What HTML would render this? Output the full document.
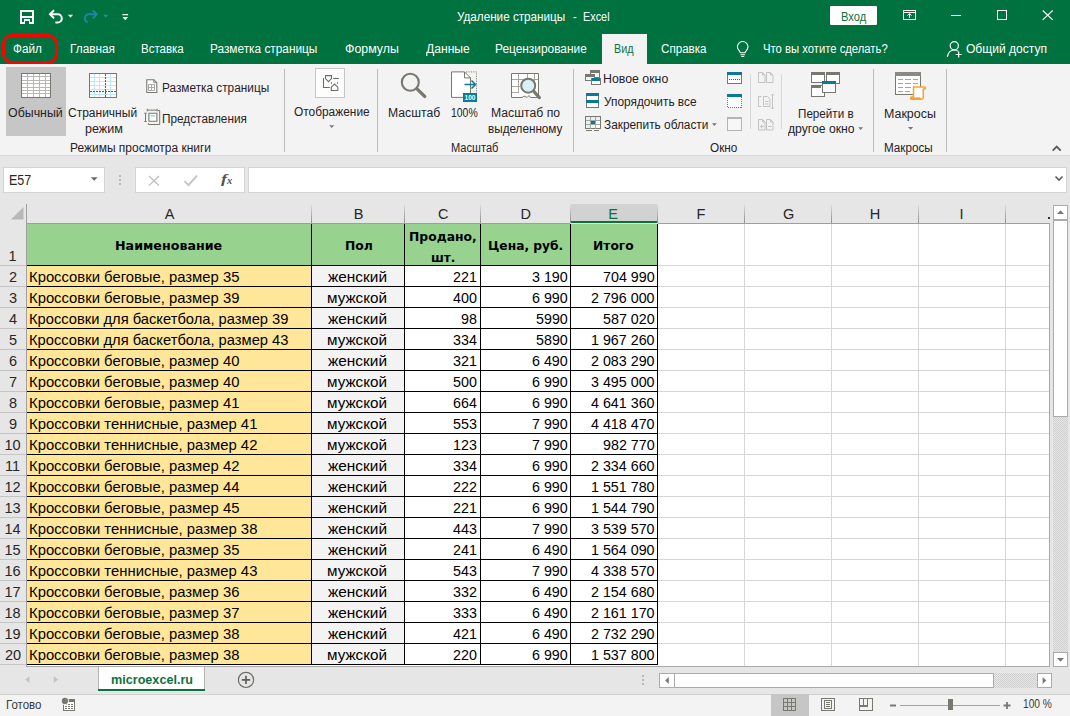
<!DOCTYPE html>
<html lang="ru">
<head>
<meta charset="utf-8">
<title>Удаление страницы - Excel</title>
<style>
*{box-sizing:border-box;margin:0;padding:0}
html,body{width:1070px;height:716px;overflow:hidden}
body{position:relative;background:#e6e6e6;font-family:"Liberation Sans",sans-serif;font-size:12px;color:#262626}
div,span,svg{position:absolute}
span{white-space:nowrap;line-height:20px;transform-origin:0 0;color:#262226}
.fr{font:12.5px/20px "Liberation Sans",sans-serif}
.fc{font:14.5px/20px "Liberation Sans",sans-serif}
.fh{font:bold 12.3px/20px "DejaVu Sans","Liberation Sans",sans-serif}
.ftab{font:bold 13.5px/20px "Liberation Sans",sans-serif}
.fs{font:12px/20px "Liberation Sans",sans-serif}
.ffx{font:italic bold 13.5px/20px "Liberation Serif",serif}
.ffx2{font:italic bold 10.5px/20px "Liberation Serif",serif}
span.fxc{color:#55544e}
span.w{color:#fff}
span.gr{color:#0f703f}
span.k{color:#000}
span.d{color:#262626}
span.st{color:#3a3a3a}
#top{left:0;top:0;width:1070px;height:64px;background:#00723f}
#vid{left:602px;top:34px;width:45px;height:30px;background:#f3f3f3}
#login{left:830px;top:6px;width:47px;height:19px;background:#fff;border-radius:1px}
#fileo{left:2px;top:34px;width:56px;height:30px;border:3px solid #ff0000;border-radius:10px}
#rib{left:0;top:64px;width:1070px;height:92px;background:#f3f3f3;border-bottom:1px solid #dadada}
.sep{width:1px;background:#bdbdbd;top:69px;height:83px}
.sep2{width:1px;background:#d8d8d8;top:74px;height:55px}
.box{background:#fff;border:1px solid #d4d4d4}
#sheet{left:27px;top:224px;width:1022px;height:442px;background:#fff}
.vl{top:224px;width:1px;height:442px;background:#d6d6d6}
.hl{left:658px;width:391px;height:1px;background:#d6d6d6}
.chs{top:204px;width:1px;height:19px;background:linear-gradient(#e0e0e0,#bdbdbd 40%,#8e8e8e)}
.rhs{left:0;width:26px;height:1px;background:#c4c4c4}
.th{top:224px;height:42px;background:#97d38e;border-right:1px solid #000;border-bottom:1px solid #000}
.c{height:22px;border:1px solid #000;border-left:0}
.a{left:27px;width:285px;background:#ffe699}
.b{left:312px;width:93px;background:#f3f3f3}
.cc{left:405px;width:76px;background:#fff}
.dd{left:481px;width:90px;background:#fff}
.e{left:571px;width:87px;background:#fff}
.dith{background-image:conic-gradient(#d0d0d0 25%,#e6e6e6 0 50%,#d0d0d0 0 75%,#e6e6e6 0);background-size:2px 2px}
</style>
</head>
<body>
<div id="top"><div id="vid"></div><div id="login"></div><div id="fileo"></div></div>
<div id="rib"></div>
<div style="left:6px;top:67px;width:60px;height:69px;background:#c6c6c6"></div>
<div class="box" style="left:315px;top:68px;width:30px;height:30px;background:#fdfdfd;border-color:#c6c6c6"></div>
<div class="sep" style="left:284px"></div>
<div class="sep" style="left:377px"></div>
<div class="sep" style="left:573px"></div>
<div class="sep" style="left:873px"></div>
<div class="sep" style="left:946px"></div>
<div class="sep2" style="left:750px"></div>
<div class="sep2" style="left:781px"></div>
<div class="box" style="left:3px;top:167px;width:102px;height:26px"></div>
<div class="box" style="left:135px;top:167px;width:110px;height:26px"></div>
<div class="box" style="left:248px;top:167px;width:819px;height:26px"></div>
<div style="left:571px;top:204px;width:87px;height:18px;background:#d2d2d2"></div>
<div style="left:570px;top:221px;width:88px;height:2px;background:#0f703f"></div>
<div style="left:26px;top:223px;width:544px;height:1px;background:#9f9f9f"></div>
<div style="left:658px;top:223px;width:392px;height:1px;background:#9f9f9f"></div>
<div style="left:26px;top:204px;width:1px;height:462px;background:#9f9f9f"></div>
<div class="chs" style="left:311px"></div>
<div class="chs" style="left:404px"></div>
<div class="chs" style="left:480px"></div>
<div class="chs" style="left:570px"></div>
<div class="chs" style="left:657px"></div>
<div class="chs" style="left:744px"></div>
<div class="chs" style="left:831px"></div>
<div class="chs" style="left:918px"></div>
<div class="chs" style="left:1005px"></div>
<div id="sheet"></div>
<div style="left:1049px;top:223px;width:1px;height:444px;background:#a8a8a8"></div>
<div style="left:26px;top:666px;width:1024px;height:1px;background:#a8a8a8"></div>
<div class="vl" style="left:744px"></div>
<div class="vl" style="left:831px"></div>
<div class="vl" style="left:918px"></div>
<div class="vl" style="left:1005px"></div>
<div class="rhs" style="top:265px"></div>
<div class="hl" style="top:265px"></div>
<div class="th" style="left:27px;width:285px"></div>
<div class="th" style="left:312px;width:93px"></div>
<div class="th" style="left:405px;width:76px"></div>
<div class="th" style="left:481px;width:90px"></div>
<div class="th" style="left:571px;width:87px"></div>
<div class="c a" style="top:265px"></div>
<div class="c b" style="top:265px"></div>
<div class="c cc" style="top:265px"></div>
<div class="c dd" style="top:265px"></div>
<div class="c e" style="top:265px"></div>
<div class="rhs" style="top:286px"></div>
<div class="hl" style="top:286px"></div>
<div class="c a" style="top:286px"></div>
<div class="c b" style="top:286px"></div>
<div class="c cc" style="top:286px"></div>
<div class="c dd" style="top:286px"></div>
<div class="c e" style="top:286px"></div>
<div class="rhs" style="top:307px"></div>
<div class="hl" style="top:307px"></div>
<div class="c a" style="top:307px"></div>
<div class="c b" style="top:307px"></div>
<div class="c cc" style="top:307px"></div>
<div class="c dd" style="top:307px"></div>
<div class="c e" style="top:307px"></div>
<div class="rhs" style="top:328px"></div>
<div class="hl" style="top:328px"></div>
<div class="c a" style="top:328px"></div>
<div class="c b" style="top:328px"></div>
<div class="c cc" style="top:328px"></div>
<div class="c dd" style="top:328px"></div>
<div class="c e" style="top:328px"></div>
<div class="rhs" style="top:349px"></div>
<div class="hl" style="top:349px"></div>
<div class="c a" style="top:349px"></div>
<div class="c b" style="top:349px"></div>
<div class="c cc" style="top:349px"></div>
<div class="c dd" style="top:349px"></div>
<div class="c e" style="top:349px"></div>
<div class="rhs" style="top:370px"></div>
<div class="hl" style="top:370px"></div>
<div class="c a" style="top:370px"></div>
<div class="c b" style="top:370px"></div>
<div class="c cc" style="top:370px"></div>
<div class="c dd" style="top:370px"></div>
<div class="c e" style="top:370px"></div>
<div class="rhs" style="top:391px"></div>
<div class="hl" style="top:391px"></div>
<div class="c a" style="top:391px"></div>
<div class="c b" style="top:391px"></div>
<div class="c cc" style="top:391px"></div>
<div class="c dd" style="top:391px"></div>
<div class="c e" style="top:391px"></div>
<div class="rhs" style="top:412px"></div>
<div class="hl" style="top:412px"></div>
<div class="c a" style="top:412px"></div>
<div class="c b" style="top:412px"></div>
<div class="c cc" style="top:412px"></div>
<div class="c dd" style="top:412px"></div>
<div class="c e" style="top:412px"></div>
<div class="rhs" style="top:433px"></div>
<div class="hl" style="top:433px"></div>
<div class="c a" style="top:433px"></div>
<div class="c b" style="top:433px"></div>
<div class="c cc" style="top:433px"></div>
<div class="c dd" style="top:433px"></div>
<div class="c e" style="top:433px"></div>
<div class="rhs" style="top:454px"></div>
<div class="hl" style="top:454px"></div>
<div class="c a" style="top:454px"></div>
<div class="c b" style="top:454px"></div>
<div class="c cc" style="top:454px"></div>
<div class="c dd" style="top:454px"></div>
<div class="c e" style="top:454px"></div>
<div class="rhs" style="top:475px"></div>
<div class="hl" style="top:475px"></div>
<div class="c a" style="top:475px"></div>
<div class="c b" style="top:475px"></div>
<div class="c cc" style="top:475px"></div>
<div class="c dd" style="top:475px"></div>
<div class="c e" style="top:475px"></div>
<div class="rhs" style="top:496px"></div>
<div class="hl" style="top:496px"></div>
<div class="c a" style="top:496px"></div>
<div class="c b" style="top:496px"></div>
<div class="c cc" style="top:496px"></div>
<div class="c dd" style="top:496px"></div>
<div class="c e" style="top:496px"></div>
<div class="rhs" style="top:517px"></div>
<div class="hl" style="top:517px"></div>
<div class="c a" style="top:517px"></div>
<div class="c b" style="top:517px"></div>
<div class="c cc" style="top:517px"></div>
<div class="c dd" style="top:517px"></div>
<div class="c e" style="top:517px"></div>
<div class="rhs" style="top:538px"></div>
<div class="hl" style="top:538px"></div>
<div class="c a" style="top:538px"></div>
<div class="c b" style="top:538px"></div>
<div class="c cc" style="top:538px"></div>
<div class="c dd" style="top:538px"></div>
<div class="c e" style="top:538px"></div>
<div class="rhs" style="top:559px"></div>
<div class="hl" style="top:559px"></div>
<div class="c a" style="top:559px"></div>
<div class="c b" style="top:559px"></div>
<div class="c cc" style="top:559px"></div>
<div class="c dd" style="top:559px"></div>
<div class="c e" style="top:559px"></div>
<div class="rhs" style="top:580px"></div>
<div class="hl" style="top:580px"></div>
<div class="c a" style="top:580px"></div>
<div class="c b" style="top:580px"></div>
<div class="c cc" style="top:580px"></div>
<div class="c dd" style="top:580px"></div>
<div class="c e" style="top:580px"></div>
<div class="rhs" style="top:601px"></div>
<div class="hl" style="top:601px"></div>
<div class="c a" style="top:601px"></div>
<div class="c b" style="top:601px"></div>
<div class="c cc" style="top:601px"></div>
<div class="c dd" style="top:601px"></div>
<div class="c e" style="top:601px"></div>
<div class="rhs" style="top:622px"></div>
<div class="hl" style="top:622px"></div>
<div class="c a" style="top:622px"></div>
<div class="c b" style="top:622px"></div>
<div class="c cc" style="top:622px"></div>
<div class="c dd" style="top:622px"></div>
<div class="c e" style="top:622px"></div>
<div class="rhs" style="top:643px"></div>
<div class="hl" style="top:643px"></div>
<div class="c a" style="top:643px"></div>
<div class="c b" style="top:643px"></div>
<div class="c cc" style="top:643px"></div>
<div class="c dd" style="top:643px"></div>
<div class="c e" style="top:643px"></div>
<div class="rhs" style="top:664px"></div>
<div style="left:1048px;top:217px;width:2px;height:2px;background:#333"></div>
<div class="dith" style="left:1053px;top:220px;width:15px;height:433px"></div>
<div class="box" style="left:1053px;top:205px;width:15px;height:15px;border-color:#ababab"></div>
<div class="box" style="left:1053px;top:220px;width:15px;height:197px;border-color:#ababab"></div>
<div class="box" style="left:1053px;top:652px;width:15px;height:15px;border-color:#ababab"></div>
<div class="dith" style="left:674px;top:673px;width:363px;height:15px"></div>
<div class="box" style="left:659px;top:673px;width:16px;height:15px;border-color:#ababab"></div>
<div class="box" style="left:674px;top:673px;width:320px;height:15px;border-color:#ababab"></div>
<div class="box" style="left:1037px;top:673px;width:15px;height:15px;border-color:#ababab"></div>
<div style="left:98px;top:667px;width:107px;height:24px;background:#fff;border-left:1px solid #b4b4b4;border-right:1px solid #b4b4b4"></div>
<div style="left:98px;top:689px;width:107px;height:2px;background:#0f703f"></div>
<div style="left:0;top:694px;width:1070px;height:22px;background:#f3f3f3"></div>
<div style="left:0;top:694px;width:1070px;height:1px;background:#d0d0d0"></div>
<div style="left:771px;top:694px;width:38px;height:22px;background:#c6c6c6"></div>
<svg width="1070" height="716" viewBox="0 0 1070 716" style="left:0;top:0" fill="none">
<!-- quick access toolbar -->
<g shape-rendering="crispEdges">
  <rect x="20" y="10" width="14" height="14" fill="#fff"/>
  <rect x="22" y="12" width="10" height="4" fill="#00723f"/>
  <rect x="22" y="18" width="10" height="4" fill="#00723f"/>
  <rect x="24" y="19" width="6" height="5" fill="#fff"/>
  <rect x="25" y="21" width="4" height="3" fill="#00723f"/>
</g>
<g stroke="#fff" stroke-width="2" fill="none">
  <path d="M54 10.300l-4 4 4 4"/>
  <path d="M50.300 14.300h7.400a4.100 4.100 0 0 1 0 8.200h-2.300"/>
</g>
<path d="M68 14.800h5l-2.500 2.900z" fill="#fff"/>
<g stroke="#1f86ab" stroke-width="1.900" fill="none">
  <path d="M92.800 10.300l4 4-4 4"/>
  <path d="M96.500 14.300h-7.400a4.100 4.100 0 0 0-1.300 8"/>
</g>
<path d="M103.300 14.800h4.800l-2.400 2.900z" fill="#2a8f9c"/>
<path d="M122.400 13.900h5.700v1.300h-5.700zM122.400 16.900h5.700l-2.850 3.300z" fill="#fff"/>
<!-- window controls -->
<g stroke="#fff" stroke-width="1" fill="none" shape-rendering="crispEdges">
  <path d="M903.5 10.5h12v9h-12zM903.5 12.5h12"/>
  <path d="M951 15.5h10"/>
  <path d="M997.5 10.5h9v9h-9z"/>
</g>
<path d="M909.5 18v-4M907.5 15.6l2-2 2 2" stroke="#fff" stroke-width="1"/>
<path d="M1042.7 10.5l10 9.4M1052.7 10.5l-10 9.4" stroke="#fff" stroke-width="1.1"/>
<!-- bulb -->
<g stroke="#fff" stroke-width="1.1" fill="none">
  <path d="M740.3 52.8c0-1.6-2.9-2.6-2.9-6a5.3 5.3 0 0 1 10.6 0c0 3.4-2.9 4.4-2.9 6z"/>
  <path d="M740.5 54.7h4.4M741.2 56.5h3"/>
</g>
<!-- share person -->
<g stroke="#fff" stroke-width="1.2" fill="none">
  <circle cx="954.3" cy="45.7" r="4.1"/>
  <path d="M947.4 57c.6-4.300 3.300-7 6.900-7 1.600 0 3 .5 4.100 1.400"/>
  <path d="M958.700 51.500v6M955.700 54.500h6"/>
</g>

<!-- ===== ribbon icons ===== -->
<!-- normal view grid -->
<g shape-rendering="crispEdges">
  <rect x="21" y="73" width="30" height="25" fill="#797870"/>
  <rect x="22" y="74" width="28" height="23" fill="#b9b9b3"/>
  <g fill="#fff">
    <rect x="22" y="74" width="5" height="2"/><rect x="28" y="74" width="5" height="2"/><rect x="34" y="74" width="5" height="2"/><rect x="40" y="74" width="5" height="2"/><rect x="46" y="74" width="4" height="2"/>
    <rect x="22" y="77" width="5" height="3"/><rect x="28" y="77" width="5" height="3"/><rect x="34" y="77" width="5" height="3"/><rect x="40" y="77" width="5" height="3"/><rect x="46" y="77" width="4" height="3"/>
    <rect x="22" y="81" width="5" height="2"/><rect x="28" y="81" width="5" height="2"/><rect x="34" y="81" width="5" height="2"/><rect x="40" y="81" width="5" height="2"/><rect x="46" y="81" width="4" height="2"/>
    <rect x="22" y="84" width="5" height="3"/><rect x="28" y="84" width="5" height="3"/><rect x="34" y="84" width="5" height="3"/><rect x="40" y="84" width="5" height="3"/><rect x="46" y="84" width="4" height="3"/>
    <rect x="22" y="88" width="5" height="2"/><rect x="28" y="88" width="5" height="2"/><rect x="34" y="88" width="5" height="2"/><rect x="40" y="88" width="5" height="2"/><rect x="46" y="88" width="4" height="2"/>
    <rect x="22" y="91" width="5" height="2"/><rect x="28" y="91" width="5" height="2"/><rect x="34" y="91" width="5" height="2"/><rect x="40" y="91" width="5" height="2"/><rect x="46" y="91" width="4" height="2"/>
    <rect x="22" y="94" width="5" height="3"/><rect x="28" y="94" width="5" height="3"/><rect x="34" y="94" width="5" height="3"/><rect x="40" y="94" width="5" height="3"/><rect x="46" y="94" width="4" height="3"/>
  </g>
</g>
<!-- page break preview -->
<g shape-rendering="crispEdges">
  <rect x="89.500" y="73.500" width="27" height="24" fill="#fff" stroke="#797870"/>
  <path d="M90 77.500h26M90 81.500h26M90 85.500h26M90 89.500h26M90 94.500h26M94.500 74v23M99.500 74v23M110.500 74v23" stroke="#bfe9f3"/>
  <path d="M105.500 74v23M90 91.500h26" stroke="#5a5a55" stroke-dasharray="2 1"/>
</g>
<!-- page layout small -->
<g stroke="#797870" fill="none">
  <path d="M146.800 79.700h7l3 3v9.800h-10z" fill="#fff" stroke-width="1.100"/>
  <path d="M153.800 79.700v3h3" stroke-width=".9"/>
  <path d="M148.500 84.500h6v6h-6zM151.500 84.500v6M148.500 87.500h6" stroke="#a9aba8"/>
</g>
<!-- custom views -->
<g stroke="#797870" fill="none">
  <path d="M148.900 113.200h8v8h-8z" fill="#fff" stroke-width="1.100"/>
  <rect x="150.500" y="115" width="4.800" height="1.800" fill="#a9dfee" stroke="none"/>
  <path d="M145.500 113.200v8.300M144.300 113.200h2.400M144.300 121.500h2.400" stroke-width="1"/>
  <path d="M147.300 110.100h9.800M147.300 108.800v2.600M157.100 108.800v2.600" stroke-width="1"/>
  <path d="M158 110.500h1.700v14h-11.300v-1.300" stroke-width="1"/>
</g>
<!-- display -->
<g stroke="#6f6e66" fill="none" stroke-width="1.100">
  <path d="M323.500 78v9.500h6.300"/>
  <path d="M325.500 75.600h6v3l-3 3.100-3-3.100z"/>
  <path d="M333.200 78.500h5.700"/>
  <path d="M331.500 82.200v1.600M337.500 82.200v1.600"/>
  <path d="M331.300 90.500h6.500v-3.300l-3.300-3.100-3.200 3.100z"/>
</g>
<path d="M329.200 125.200h5l-2.500 2.800z" fill="#797870"/>
<!-- zoom magnifier -->
<circle cx="410.300" cy="82.200" r="8.500" stroke="#797870" stroke-width="2.100"/>
<path d="M417 88.800l7.800 7.700" stroke="#797870" stroke-width="3.200" stroke-linecap="round"/>
<!-- 100% -->
<g>
  <path d="M451.500 71.900h13l6 6v19.500h-19z" fill="#fff" stroke="#797870"/>
  <path d="M464.500 71.900v6h6" stroke="#797870"/>
  <path d="M466 71.900h10.500v21" stroke="#797870" stroke-dasharray="1.200 1.200" stroke-width=".9"/>
  <path d="M464.500 84.500h10.500M471.500 80.500l4 4-4 4" stroke="#0b7a94" stroke-width="1.500"/>
  <rect x="463" y="93" width="14" height="9" fill="#0b7a94"/>
  <text x="470" y="100.300" text-anchor="middle" font-family="Liberation Sans, sans-serif" font-weight="bold" font-size="7.200" fill="#fff" textLength="11" lengthAdjust="spacingAndGlyphs">100</text>
</g>
<!-- zoom to selection -->
<g>
  <path d="M511.500 73.500h27v24h-8l-1.500-2-2 2-3-1.500-2 1.500h-10.500z" fill="#fff" stroke="#797870"/>
  <path d="M512 79.500h26M512 86.500h8M512 92.500h7M518.500 74v18M527.500 74v5M534.500 74v8" stroke="#a5a49e"/>
  <circle cx="528.200" cy="85.700" r="7" fill="#d9f0f6" stroke="#797870" stroke-width="2"/>
  <path d="M533.800 91.400l5.600 6.200" stroke="#797870" stroke-width="3.100" stroke-linecap="round"/>
</g>
<!-- new window -->
<g shape-rendering="crispEdges">
  <rect x="590.500" y="70.500" width="9" height="7" fill="#f3f3f3" stroke="#797870"/><rect x="590" y="70" width="10" height="3" fill="#797870"/>
  <rect x="585.500" y="74.500" width="9" height="6" fill="#f3f3f3" stroke="#797870"/><rect x="585" y="74" width="10" height="3" fill="#797870"/>
  <rect x="591.500" y="78.500" width="9" height="6" fill="#fff" stroke="#797870"/><rect x="592" y="78" width="8" height="3" fill="#0b7a94"/>
</g>
<!-- arrange all -->
<g shape-rendering="crispEdges">
  <rect x="586.500" y="93.500" width="12" height="14" fill="#fff" stroke="#797870"/>
  <rect x="586" y="93" width="13" height="3" fill="#0b7a94"/><rect x="586" y="100" width="13" height="3" fill="#0b7a94"/>
</g>
<!-- freeze panes -->
<g shape-rendering="crispEdges">
  <rect x="585.500" y="116.500" width="15" height="12" fill="#fff" stroke="#797870"/>
  <path d="M590.500 117v12M595.500 117v12M586 120.500h14M586 124.500h14" stroke="#a5a49e"/>
  <rect x="586" y="117" width="4" height="3" fill="#dff3f8"/><rect x="591" y="117" width="4" height="3" fill="#dff3f8"/><rect x="596" y="117" width="4" height="3" fill="#dff3f8"/>
  <rect x="586" y="121" width="4" height="3" fill="#dff3f8"/><rect x="586" y="125" width="4" height="3" fill="#dff3f8"/>
  <rect x="591" y="121" width="4" height="3" fill="#0b7a94"/>
  <path d="M586 130.500h6M594 130.500h5" stroke="#797870"/>
</g>
<path d="M712 123.200h4.800l-2.400 2.800z" fill="#797870"/>
<!-- split / hide / unhide -->
<g shape-rendering="crispEdges">
  <rect x="727.500" y="72.500" width="14" height="11" fill="#fff" stroke="#797870"/><rect x="727" y="72" width="15" height="3" fill="#0b7a94"/>
  <path d="M729 79.500h12" stroke="#0b7a94" stroke-dasharray="1 1"/>
  <rect x="727.500" y="94.500" width="14" height="13" fill="#fff" stroke="#797870" stroke-dasharray="1 1"/><rect x="727" y="94" width="15" height="3" fill="#0b7a94"/>
  <rect x="727.500" y="117.500" width="14" height="13" fill="#f7f7f7" stroke="#b4b4b0"/><rect x="727" y="117" width="15" height="2" fill="#b4b4b0"/>
</g>
<!-- disabled icons -->
<g stroke="#c3c3c3" fill="none">
  <path d="M758.500 72.500h4l2.500 2.500v7.500h-6.500zM766.500 72.500h4l2.500 2.500v7.500h-6.500zM762.500 72.500v2.500h2.500M770.500 72.500v2.500h2.500"/>
  <path d="M758.500 96.500h3M758.500 106.500h3M758.500 96.500v10M763.500 96.500h4l2.500 2.500v7.500h-6.500zM765 101.500h3.500M765 104h3.500M772.500 94v15M771 95.500l1.500-1.500 1.500 1.500M771 107.500l1.500 1.500 1.500-1.500"/>
  <path d="M758.500 119.500h4l2.500 2.500v8h-6.500zM766.500 119.500h4l2.500 2.500v8h-6.500zM762.500 119.500v2.500h2.500M770.500 119.500v2.500h2.500M760 126.500h3.500M761.700 124.700v3.600M768 126.500h3.500"/>
</g>
<!-- switch windows -->
<g shape-rendering="crispEdges">
  <rect x="811.500" y="72.500" width="13" height="10" fill="#fff" stroke="#797870"/><rect x="811" y="72" width="14" height="3" fill="#797870"/>
  <rect x="826.500" y="72.500" width="13" height="11" fill="#fff" stroke="#797870"/><rect x="826" y="72" width="14" height="3" fill="#797870"/>
  <rect x="811.500" y="85.500" width="13" height="11" fill="#fff" stroke="#797870"/><rect x="811" y="85" width="10" height="3" fill="#797870"/>
  <rect x="822.500" y="81.500" width="13" height="11" fill="#fff" stroke="#797870"/><rect x="822" y="81" width="14" height="3" fill="#0b7a94"/>
</g>
<path d="M858.200 127.300h4.800l-2.400 2.800z" fill="#797870"/>
<!-- macros -->
<g shape-rendering="crispEdges">
  <rect x="895.500" y="72.500" width="25" height="22" fill="#fff" stroke="#797870"/><rect x="895" y="72" width="26" height="4" fill="#8a8983"/>
  <path d="M898 79.500h5M905 79.500h6M913 79.500h5M898 83.500h5M905 83.500h6M913 83.500h5M898 87.500h5M905 87.500h6M898 91.500h5M905 91.500h5" stroke="#a5a49e"/>
</g>
<path d="M913.500 87h10.800c1.200 0 1.400 2 0 2h-1v8.300c0 1.600-1.200 2-2.300 2h-9.300c-1.500 0-1.500-2.300 0-2.300h1.800z" fill="#fff" stroke="#f7a233" stroke-width="1.500"/>
<path d="M910.500 98.300h10" stroke="#f7a233" stroke-width="2"/>
<path d="M908 126.900h5.200l-2.600 2.900z" fill="#797870"/>
<path d="M1052.700 150.600l4-4 4 4" stroke="#5c5c58" stroke-width="1.900"/>

<!-- ===== formula bar ===== -->
<path d="M90.700 177.200h7l-3.500 3.600z" fill="#6a6a66"/>
<g fill="#b9b9b9"><rect x="119" y="175" width="2" height="2"/><rect x="119" y="179" width="2" height="2"/><rect x="119" y="183" width="2" height="2"/></g>
<path d="M149 176l10 9.500M159 176l-10 9.500" stroke="#c2c2c2" stroke-width="1.400"/>
<path d="M184.500 181l4 4.200 8.500-9.500" stroke="#c2c2c2" stroke-width="1.800"/>
<path d="M1055.500 176.500l3.500 3.500 3.500-3.500" stroke="#5c5c58" stroke-width="1.600"/>
<!-- corner triangle -->
<path d="M11 219.500h12.500v-12.500z" fill="#b8b8b8"/>
<!-- scroll arrows -->
<path d="M1057 214h7l-3.500-3.700z" fill="#797870"/>
<path d="M1057 658h7l-3.500 3.700z" fill="#797870"/>
<path d="M668.800 677v7l-3.700-3.500z" fill="#797870"/>
<path d="M1042.600 677v7l3.700-3.500z" fill="#797870"/>
<g fill="#b9b9b9"><rect x="642" y="675" width="2" height="2"/><rect x="642" y="679" width="2" height="2"/><rect x="642" y="683" width="2" height="2"/></g>
<!-- sheet nav -->
<path d="M29.500 676.300v6.600l-4.300-3.300zM53.800 676.300v6.600l4.300-3.300z" fill="#c3c3c3"/>
<circle cx="246" cy="679.900" r="7.600" stroke="#6e6e6a" stroke-width="1.200"/>
<path d="M241.800 679.900h8.400M246 675.700v8.400" stroke="#5e5e5a" stroke-width="1.700"/>
<!-- status bar icons -->
<g shape-rendering="crispEdges">
  <rect x="63.500" y="699.500" width="11" height="11" fill="#fff" stroke="#797870"/>
  <rect x="63" y="699" width="12" height="3" fill="#797870"/>
  <rect x="63" y="710" width="12" height="1" fill="#797870"/>
  <path d="M65 704.500h2M68 704.500h2M71 704.500h2M65 706.500h2M68 706.500h2M71 706.500h2M65 708.500h2M68 708.500h2M71 708.500h2" stroke="#797870"/>
</g>
<circle cx="64.900" cy="700.900" r="4" fill="#f3f3f3"/>
<circle cx="64.900" cy="700.900" r="3.100" fill="#797870"/>
<g shape-rendering="crispEdges" fill="#797870">
  <rect x="783" y="698" width="13" height="13"/>
  <g fill="#c6c6c6"><rect x="784" y="699" width="3" height="3"/><rect x="788" y="699" width="3" height="3"/><rect x="792" y="699" width="3" height="3"/><rect x="784" y="703" width="3" height="3"/><rect x="788" y="703" width="3" height="3"/><rect x="792" y="703" width="3" height="3"/><rect x="784" y="707" width="3" height="3"/><rect x="788" y="707" width="3" height="3"/><rect x="792" y="707" width="3" height="3"/></g>
</g>
<g shape-rendering="crispEdges" stroke="#797870" fill="none">
  <rect x="821.500" y="698.500" width="13" height="12"/>
  <rect x="824.500" y="700.500" width="7" height="8"/>
  <path d="M826 702.500h4M826 704.500h4M826 706.500h4"/>
  <path d="M859.500 698.500h13v12h-13zM863.500 699v7M867.500 699v7"/>
  <path d="M860 706h8" stroke-width="2"/>
</g>
<path d="M890 705.500h6" stroke="#797870" stroke-width="2"/>
<path d="M900 705.500h100" stroke="#a3a3a0" stroke-width="1" shape-rendering="crispEdges"/>
<rect x="948" y="699" width="5" height="11" fill="#797870"/>
<path d="M1003.500 705.500h7M1007 702v7" stroke="#797870" stroke-width="1.800"/>
</svg>
<span class="fr w" style="left:457.10px;top:7.30px;transform:scaleX(0.9353)">Удаление страницы</span>
<span class="fr w" style="left:573.00px;top:7.30px;transform:scaleX(0.9000)">-</span>
<span class="fr w" style="left:582.73px;top:7.30px;transform:scaleX(0.8684)">Excel</span>
<span class="fr gr" style="left:840.71px;top:7.30px;transform:scaleX(0.8934)">Вход</span>
<span class="fr w" style="left:13.20px;top:39.00px;transform:scaleX(0.9396)">Файл</span>
<span class="fr w" style="left:70.35px;top:39.00px;transform:scaleX(0.9452)">Главная</span>
<span class="fr w" style="left:141.28px;top:39.00px;transform:scaleX(0.9185)">Вставка</span>
<span class="fr w" style="left:210.35px;top:39.00px;transform:scaleX(0.9465)">Разметка страницы</span>
<span class="fr w" style="left:345.30px;top:39.00px;transform:scaleX(0.9888)">Формулы</span>
<span class="fr w" style="left:425.50px;top:39.00px;transform:scaleX(0.9689)">Данные</span>
<span class="fr w" style="left:495.45px;top:39.00px;transform:scaleX(0.9511)">Рецензирование</span>
<span class="fr w" style="left:661.30px;top:39.00px;transform:scaleX(0.9290)">Справка</span>
<span class="fr w" style="left:762.70px;top:39.00px;transform:scaleX(0.9021)">Что вы хотите сделать?</span>
<span class="fr w" style="left:966.00px;top:39.00px;transform:scaleX(0.9638)">Общий доступ</span>
<span class="fr gr" style="left:613.94px;top:39.00px;transform:scaleX(0.8647)">Вид</span>
<span class="fr " style="left:8.10px;top:103.00px;transform:scaleX(0.9916)">Обычный</span>
<span class="fr " style="left:68.30px;top:103.00px;transform:scaleX(0.9605)">Страничный</span>
<span class="fr " style="left:84.80px;top:119.00px;transform:scaleX(1.0025)">режим</span>
<span class="fr " style="left:162.46px;top:77.70px;transform:scaleX(0.9447)">Разметка страницы</span>
<span class="fr " style="left:162.46px;top:108.70px;transform:scaleX(0.9435)">Представления</span>
<span class="fr " style="left:69.54px;top:138.00px;transform:scaleX(0.9583)">Режимы просмотра книги</span>
<span class="fr " style="left:293.50px;top:101.50px;transform:scaleX(0.9519)">Отображение</span>
<span class="fr " style="left:387.83px;top:103.00px;transform:scaleX(0.9748)">Масштаб</span>
<span class="fr " style="left:451.00px;top:103.00px;transform:scaleX(0.8350)">100%</span>
<span class="fr " style="left:490.72px;top:103.00px;transform:scaleX(0.9768)">Масштаб по</span>
<span class="fr " style="left:487.50px;top:119.30px;transform:scaleX(0.9365)">выделенному</span>
<span class="fr " style="left:450.71px;top:138.00px;transform:scaleX(0.8869)">Масштаб</span>
<span class="fr " style="left:603.41px;top:69.20px;transform:scaleX(0.9865)">Новое окно</span>
<span class="fr " style="left:604.40px;top:91.80px;transform:scaleX(0.9487)">Упорядочить все</span>
<span class="fr " style="left:604.40px;top:115.00px;transform:scaleX(0.9482)">Закрепить области</span>
<span class="fr " style="left:797.67px;top:103.50px;transform:scaleX(0.9322)">Перейти в</span>
<span class="fr " style="left:788.10px;top:119.30px;transform:scaleX(0.9731)">другое окно</span>
<span class="fr " style="left:710.20px;top:138.00px;transform:scaleX(0.9418)">Окно</span>
<span class="fr " style="left:883.50px;top:103.50px;transform:scaleX(0.9956)">Макросы</span>
<span class="fr " style="left:884.47px;top:138.00px;transform:scaleX(0.9349)">Макросы</span>
<span class="fc d" style="left:9.14px;top:170.00px;transform:scaleX(0.8611)">E57</span>
<span class="ffx fxc" style="left:220.50px;top:168.80px;transform:scaleX(1.3500)">f</span>
<span class="ffx2 fxc" style="left:227.00px;top:170.80px;transform:scaleX(1.0000)">x</span>
<span class="fc d" style="left:164.80px;top:203.50px;transform:scaleX(1.0000)">A</span>
<span class="fc d" style="left:353.80px;top:203.50px;transform:scaleX(1.0000)">B</span>
<span class="fc d" style="left:438.00px;top:203.50px;transform:scaleX(1.0000)">C</span>
<span class="fc d" style="left:520.50px;top:203.50px;transform:scaleX(1.0000)">D</span>
<span class="fc d" style="left:696.50px;top:203.50px;transform:scaleX(1.0000)">F</span>
<span class="fc d" style="left:783.00px;top:203.50px;transform:scaleX(1.0000)">G</span>
<span class="fc d" style="left:869.80px;top:203.50px;transform:scaleX(1.0000)">H</span>
<span class="fc d" style="left:959.50px;top:203.50px;transform:scaleX(1.0000)">I</span>
<span class="fc gr" style="left:608.30px;top:203.50px;transform:scaleX(1.0000)">E</span>
<span class="fh k" style="left:115.17px;top:235.80px;transform:scaleX(1.0299)">Наименование</span>
<span class="fh k" style="left:344.69px;top:235.80px;transform:scaleX(1.0062)">Пол</span>
<span class="fh k" style="left:408.50px;top:226.50px;transform:scaleX(1.0043)">Продано,</span>
<span class="fh k" style="left:430.82px;top:247.50px;transform:scaleX(0.9833)">шт.</span>
<span class="fh k" style="left:488.20px;top:235.80px;transform:scaleX(0.9960)">Цена, руб.</span>
<span class="fh k" style="left:593.20px;top:235.80px;transform:scaleX(0.9977)">Итого</span>
<span class="fc d" style="left:8.50px;top:245.50px;transform:scaleX(1.0000)">1</span>
<span class="fc d" style="left:9.00px;top:266.60px;transform:scaleX(1.0000)">2</span>
<span class="fc k" style="left:28.98px;top:266.60px;transform:scaleX(1.0221)">Кроссовки беговые, размер 35</span>
<span class="fc k" style="left:328.30px;top:266.60px;transform:scaleX(1.0619)">женский</span>
<span class="fc k" style="left:453.43px;top:266.60px;transform:scaleX(0.9850)">221</span>
<span class="fc k" style="left:531.92px;top:266.60px;transform:scaleX(0.9850)">3 190</span>
<span class="fc k" style="left:603.04px;top:266.60px;transform:scaleX(0.9850)">704 990</span>
<span class="fc d" style="left:9.00px;top:287.60px;transform:scaleX(1.0000)">3</span>
<span class="fc k" style="left:28.98px;top:287.60px;transform:scaleX(1.0221)">Кроссовки беговые, размер 39</span>
<span class="fc k" style="left:327.25px;top:287.60px;transform:scaleX(1.0506)">мужской</span>
<span class="fc k" style="left:453.43px;top:287.60px;transform:scaleX(0.9850)">400</span>
<span class="fc k" style="left:531.92px;top:287.60px;transform:scaleX(0.9850)">6 990</span>
<span class="fc k" style="left:591.12px;top:287.60px;transform:scaleX(0.9850)">2 796 000</span>
<span class="fc d" style="left:9.00px;top:308.60px;transform:scaleX(1.0000)">4</span>
<span class="fc k" style="left:28.99px;top:308.60px;transform:scaleX(1.0144)">Кроссовки для баскетбола, размер 39</span>
<span class="fc k" style="left:328.30px;top:308.60px;transform:scaleX(1.0619)">женский</span>
<span class="fc k" style="left:461.38px;top:308.60px;transform:scaleX(0.9850)">98</span>
<span class="fc k" style="left:535.89px;top:308.60px;transform:scaleX(0.9850)">5990</span>
<span class="fc k" style="left:603.04px;top:308.60px;transform:scaleX(0.9850)">587 020</span>
<span class="fc d" style="left:9.00px;top:329.60px;transform:scaleX(1.0000)">5</span>
<span class="fc k" style="left:28.99px;top:329.60px;transform:scaleX(1.0144)">Кроссовки для баскетбола, размер 43</span>
<span class="fc k" style="left:327.25px;top:329.60px;transform:scaleX(1.0506)">мужской</span>
<span class="fc k" style="left:453.43px;top:329.60px;transform:scaleX(0.9850)">334</span>
<span class="fc k" style="left:535.89px;top:329.60px;transform:scaleX(0.9850)">5890</span>
<span class="fc k" style="left:591.12px;top:329.60px;transform:scaleX(0.9850)">1 967 260</span>
<span class="fc d" style="left:9.00px;top:350.60px;transform:scaleX(1.0000)">6</span>
<span class="fc k" style="left:28.98px;top:350.60px;transform:scaleX(1.0221)">Кроссовки беговые, размер 40</span>
<span class="fc k" style="left:328.30px;top:350.60px;transform:scaleX(1.0619)">женский</span>
<span class="fc k" style="left:453.43px;top:350.60px;transform:scaleX(0.9850)">321</span>
<span class="fc k" style="left:531.92px;top:350.60px;transform:scaleX(0.9850)">6 490</span>
<span class="fc k" style="left:591.12px;top:350.60px;transform:scaleX(0.9850)">2 083 290</span>
<span class="fc d" style="left:9.00px;top:371.60px;transform:scaleX(1.0000)">7</span>
<span class="fc k" style="left:28.98px;top:371.60px;transform:scaleX(1.0221)">Кроссовки беговые, размер 40</span>
<span class="fc k" style="left:327.25px;top:371.60px;transform:scaleX(1.0506)">мужской</span>
<span class="fc k" style="left:453.43px;top:371.60px;transform:scaleX(0.9850)">500</span>
<span class="fc k" style="left:531.92px;top:371.60px;transform:scaleX(0.9850)">6 990</span>
<span class="fc k" style="left:591.12px;top:371.60px;transform:scaleX(0.9850)">3 495 000</span>
<span class="fc d" style="left:9.00px;top:392.60px;transform:scaleX(1.0000)">8</span>
<span class="fc k" style="left:28.98px;top:392.60px;transform:scaleX(1.0221)">Кроссовки беговые, размер 41</span>
<span class="fc k" style="left:327.25px;top:392.60px;transform:scaleX(1.0506)">мужской</span>
<span class="fc k" style="left:453.43px;top:392.60px;transform:scaleX(0.9850)">664</span>
<span class="fc k" style="left:531.92px;top:392.60px;transform:scaleX(0.9850)">6 990</span>
<span class="fc k" style="left:591.12px;top:392.60px;transform:scaleX(0.9850)">4 641 360</span>
<span class="fc d" style="left:9.00px;top:413.60px;transform:scaleX(1.0000)">9</span>
<span class="fc k" style="left:28.97px;top:413.60px;transform:scaleX(1.0251)">Кроссовки теннисные, размер 41</span>
<span class="fc k" style="left:327.25px;top:413.60px;transform:scaleX(1.0506)">мужской</span>
<span class="fc k" style="left:453.43px;top:413.60px;transform:scaleX(0.9850)">553</span>
<span class="fc k" style="left:531.92px;top:413.60px;transform:scaleX(0.9850)">7 990</span>
<span class="fc k" style="left:591.12px;top:413.60px;transform:scaleX(0.9850)">4 418 470</span>
<span class="fc d" style="left:4.47px;top:434.60px;transform:scaleX(1.0000)">10</span>
<span class="fc k" style="left:28.97px;top:434.60px;transform:scaleX(1.0251)">Кроссовки теннисные, размер 42</span>
<span class="fc k" style="left:327.25px;top:434.60px;transform:scaleX(1.0506)">мужской</span>
<span class="fc k" style="left:453.43px;top:434.60px;transform:scaleX(0.9850)">123</span>
<span class="fc k" style="left:531.92px;top:434.60px;transform:scaleX(0.9850)">7 990</span>
<span class="fc k" style="left:603.04px;top:434.60px;transform:scaleX(0.9850)">982 770</span>
<span class="fc d" style="left:5.01px;top:455.60px;transform:scaleX(1.0000)">11</span>
<span class="fc k" style="left:28.98px;top:455.60px;transform:scaleX(1.0221)">Кроссовки беговые, размер 42</span>
<span class="fc k" style="left:328.30px;top:455.60px;transform:scaleX(1.0619)">женский</span>
<span class="fc k" style="left:453.43px;top:455.60px;transform:scaleX(0.9850)">334</span>
<span class="fc k" style="left:531.92px;top:455.60px;transform:scaleX(0.9850)">6 990</span>
<span class="fc k" style="left:591.12px;top:455.60px;transform:scaleX(0.9850)">2 334 660</span>
<span class="fc d" style="left:4.47px;top:476.60px;transform:scaleX(1.0000)">12</span>
<span class="fc k" style="left:28.98px;top:476.60px;transform:scaleX(1.0221)">Кроссовки беговые, размер 44</span>
<span class="fc k" style="left:328.30px;top:476.60px;transform:scaleX(1.0619)">женский</span>
<span class="fc k" style="left:453.43px;top:476.60px;transform:scaleX(0.9850)">222</span>
<span class="fc k" style="left:531.92px;top:476.60px;transform:scaleX(0.9850)">6 990</span>
<span class="fc k" style="left:591.12px;top:476.60px;transform:scaleX(0.9850)">1 551 780</span>
<span class="fc d" style="left:4.47px;top:497.60px;transform:scaleX(1.0000)">13</span>
<span class="fc k" style="left:28.98px;top:497.60px;transform:scaleX(1.0221)">Кроссовки беговые, размер 45</span>
<span class="fc k" style="left:328.30px;top:497.60px;transform:scaleX(1.0619)">женский</span>
<span class="fc k" style="left:453.43px;top:497.60px;transform:scaleX(0.9850)">221</span>
<span class="fc k" style="left:531.92px;top:497.60px;transform:scaleX(0.9850)">6 990</span>
<span class="fc k" style="left:591.12px;top:497.60px;transform:scaleX(0.9850)">1 544 790</span>
<span class="fc d" style="left:4.47px;top:518.60px;transform:scaleX(1.0000)">14</span>
<span class="fc k" style="left:28.97px;top:518.60px;transform:scaleX(1.0251)">Кроссовки теннисные, размер 38</span>
<span class="fc k" style="left:328.30px;top:518.60px;transform:scaleX(1.0619)">женский</span>
<span class="fc k" style="left:453.43px;top:518.60px;transform:scaleX(0.9850)">443</span>
<span class="fc k" style="left:531.92px;top:518.60px;transform:scaleX(0.9850)">7 990</span>
<span class="fc k" style="left:591.12px;top:518.60px;transform:scaleX(0.9850)">3 539 570</span>
<span class="fc d" style="left:4.47px;top:539.60px;transform:scaleX(1.0000)">15</span>
<span class="fc k" style="left:28.98px;top:539.60px;transform:scaleX(1.0221)">Кроссовки беговые, размер 35</span>
<span class="fc k" style="left:328.30px;top:539.60px;transform:scaleX(1.0619)">женский</span>
<span class="fc k" style="left:453.43px;top:539.60px;transform:scaleX(0.9850)">241</span>
<span class="fc k" style="left:531.92px;top:539.60px;transform:scaleX(0.9850)">6 490</span>
<span class="fc k" style="left:591.12px;top:539.60px;transform:scaleX(0.9850)">1 564 090</span>
<span class="fc d" style="left:4.47px;top:560.60px;transform:scaleX(1.0000)">16</span>
<span class="fc k" style="left:28.97px;top:560.60px;transform:scaleX(1.0251)">Кроссовки теннисные, размер 43</span>
<span class="fc k" style="left:327.25px;top:560.60px;transform:scaleX(1.0506)">мужской</span>
<span class="fc k" style="left:453.43px;top:560.60px;transform:scaleX(0.9850)">543</span>
<span class="fc k" style="left:531.92px;top:560.60px;transform:scaleX(0.9850)">7 990</span>
<span class="fc k" style="left:591.12px;top:560.60px;transform:scaleX(0.9850)">4 338 570</span>
<span class="fc d" style="left:4.47px;top:581.60px;transform:scaleX(1.0000)">17</span>
<span class="fc k" style="left:28.98px;top:581.60px;transform:scaleX(1.0221)">Кроссовки беговые, размер 36</span>
<span class="fc k" style="left:328.30px;top:581.60px;transform:scaleX(1.0619)">женский</span>
<span class="fc k" style="left:453.43px;top:581.60px;transform:scaleX(0.9850)">332</span>
<span class="fc k" style="left:531.92px;top:581.60px;transform:scaleX(0.9850)">6 490</span>
<span class="fc k" style="left:591.12px;top:581.60px;transform:scaleX(0.9850)">2 154 680</span>
<span class="fc d" style="left:4.47px;top:602.60px;transform:scaleX(1.0000)">18</span>
<span class="fc k" style="left:28.98px;top:602.60px;transform:scaleX(1.0221)">Кроссовки беговые, размер 37</span>
<span class="fc k" style="left:328.30px;top:602.60px;transform:scaleX(1.0619)">женский</span>
<span class="fc k" style="left:453.43px;top:602.60px;transform:scaleX(0.9850)">333</span>
<span class="fc k" style="left:531.92px;top:602.60px;transform:scaleX(0.9850)">6 490</span>
<span class="fc k" style="left:591.12px;top:602.60px;transform:scaleX(0.9850)">2 161 170</span>
<span class="fc d" style="left:4.47px;top:623.60px;transform:scaleX(1.0000)">19</span>
<span class="fc k" style="left:28.98px;top:623.60px;transform:scaleX(1.0221)">Кроссовки беговые, размер 38</span>
<span class="fc k" style="left:328.30px;top:623.60px;transform:scaleX(1.0619)">женский</span>
<span class="fc k" style="left:453.43px;top:623.60px;transform:scaleX(0.9850)">421</span>
<span class="fc k" style="left:531.92px;top:623.60px;transform:scaleX(0.9850)">6 490</span>
<span class="fc k" style="left:591.12px;top:623.60px;transform:scaleX(0.9850)">2 732 290</span>
<span class="fc d" style="left:4.97px;top:644.60px;transform:scaleX(1.0000)">20</span>
<span class="fc k" style="left:28.98px;top:644.60px;transform:scaleX(1.0221)">Кроссовки беговые, размер 38</span>
<span class="fc k" style="left:327.25px;top:644.60px;transform:scaleX(1.0506)">мужской</span>
<span class="fc k" style="left:453.43px;top:644.60px;transform:scaleX(0.9850)">220</span>
<span class="fc k" style="left:531.92px;top:644.60px;transform:scaleX(0.9850)">6 990</span>
<span class="fc k" style="left:591.12px;top:644.60px;transform:scaleX(0.9850)">1 537 800</span>
<span class="ftab gr" style="left:111.00px;top:670.10px;transform:scaleX(0.9343)">microexcel.ru</span>
<span class="fs st" style="left:5.50px;top:694.80px;transform:scaleX(0.9577)">Готово</span>
<span class="fs st" style="left:1022.70px;top:694.40px;transform:scaleX(0.8499)">100 %</span>
</body>
</html>
